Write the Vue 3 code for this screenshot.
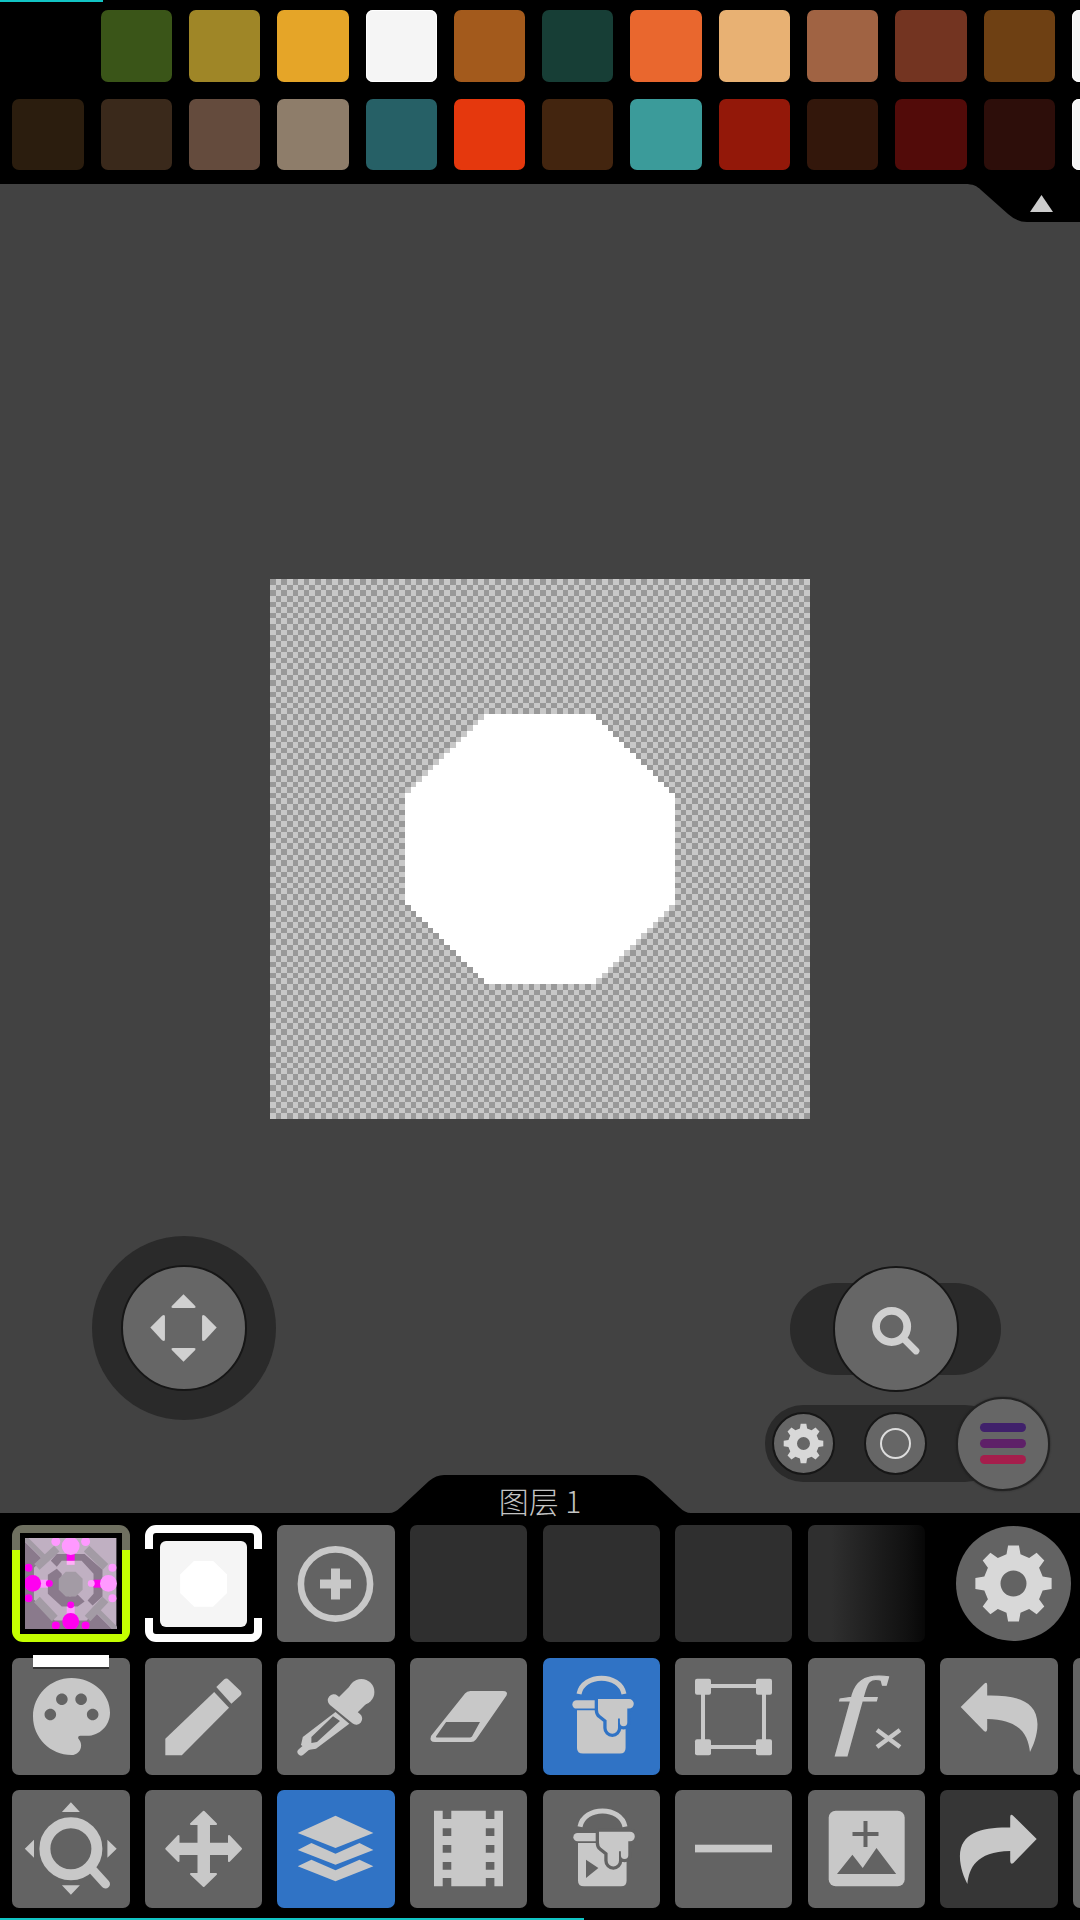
<template>
  <div class="app">
    <header class="palette">
      <div class="progress-top"></div>
      <div
        v-for="(color, i) in swatches"
        :key="i"
        class="swatch"
        :class="{ light: color === '#f5f5f5' }"
        :style="{ background: color }"
      ></div>
    </header>

    <main class="stage">
      <svg class="notch" viewBox="0 0 115 38">
        <path d="M0 0C8 0 12 2 16 6L43 30Q52 38 62 38H115V0Z" fill="#000" />
        <path d="M65 28H88L76.5 11Z" fill="#ccc" />
      </svg>

      <svg class="canvas" viewBox="0 0 96 96" shape-rendering="crispEdges">
        <rect width="96" height="96" fill="#c8c8c8" />
        <path :d="checkerPath" fill="#999" />
        <rect
          v-for="row in octagonRows"
          :key="row.y"
          :x="row.x"
          :y="row.y"
          :width="row.w"
          height="1"
          fill="#fff"
        />
      </svg>

      <!-- 摇杆 -->
      <div class="joystick">
        <div class="knob">
          <svg viewBox="0 0 125 125" class="fill-icon">
            <path d="M62 28L74 40Q75 42 73 42H51Q49 42 50 40Z" />
            <path d="M62 97L74 85Q75 83 73 83H51Q49 83 50 85Z" />
            <path d="M28 62L40 50Q43 48 43 51V74Q43 77 40 75Z" />
            <path d="M96 62L84 50Q81 48 81 51V74Q81 77 84 75Z" />
          </svg>
        </div>
      </div>

      <div class="zoom-track">
        <div class="knob">
          <svg viewBox="0 0 125 125" class="line-icon">
            <circle cx="58" cy="60" r="16" stroke-width="8" />
            <path d="M71 73L83 85" stroke-width="7" stroke-linecap="round" />
          </svg>
        </div>
      </div>

      <div class="quick-bar">
        <div class="mini">
          <svg viewBox="0 0 63 63" class="gear-icon">
            <path :d="gearPath(31.5, 31.5, 20, 15.5, 6.5)" fill-rule="evenodd" />
          </svg>
        </div>
        <div class="mini">
          <span class="ring"></span>
        </div>
        <div class="menu">
          <span class="bar" style="background: #40216b"></span>
          <span class="bar" style="background: #5e2068"></span>
          <span class="bar" style="background: #a51e4c"></span>
        </div>
      </div>

      <div class="tab">
        <svg viewBox="0 0 302 38">
          <path d="M0 38Q6 38 12 32L40 6Q47 0 55 0H247Q255 0 262 6L290 32Q296 38 302 38Z" fill="#000" />
        </svg>
        <span>图层 1</span>
      </div>
    </main>

    <footer class="tools">
      <div class="tool-grid">
        <!-- 第一行: 图层 -->
        <div class="layer-current">
          <svg viewBox="0 0 92 92" class="thumb">
            <rect width="92" height="92" fill="#c0b0c2" />
            <path d="M0 4V92H88Z" fill="#8a7a8c" />
            <path d="M0 0L92 92" stroke="#a39ba5" stroke-width="5" />
            <path d="M30 9L62 9L83 30V62L62 83H30L9 62V30Z" fill="#c0b0c2" />
            <path
              d="M32 10.7L12 29M62 10.7L81 29M12 62L30 81M81 62L63 81"
              stroke="#a39ba5"
              stroke-width="8"
              fill="none"
            />
            <path d="M32 16H60L78 32V59L68 68L63 63L69 56V36L57 23H37L32 29L26 23Z" fill="#8a7a8c" />
            <path d="M23 37L32 31L37 36V52L45 59L53 57L60 64L53 69H37L23 56Z" fill="#8a7a8c" />
            <path d="M41 34H51L58 41V52L51 59H41L34 52V41Z" fill="#a39ba5" />
            <rect
              v-for="(s, i) in thumbSquares"
              :key="'s' + i"
              :x="s[0]"
              :y="s[1]"
              width="8"
              :height="s[3] || 8"
              :fill="s[2]"
            />
            <circle
              v-for="(d, i) in thumbDots"
              :key="'d' + i"
              :cx="d[0]"
              :cy="d[1]"
              :r="d[2]"
              :fill="d[3]"
            />
          </svg>
        </div>

        <div class="layer-frame">
          <div class="layer-preview"><span></span></div>
        </div>

        <div class="tool">
          <svg viewBox="0 0 117.4 117.4">
            <circle cx="58.5" cy="59" r="34.6" fill="none" stroke="#c8c8c8" stroke-width="6.6" />
            <path d="M54 43.5H63V54.5H74V63.5H63V74.5H54V63.5H43V54.5H54Z" />
          </svg>
        </div>
        <div class="slot"></div>
        <div class="slot"></div>
        <div class="slot"></div>
        <div class="slot fade"></div>
        <div class="settings">
          <svg viewBox="0 0 115 115" class="gear-icon">
            <path :d="gearPath(57.5, 57.5, 38.5, 30, 13)" fill-rule="evenodd" />
          </svg>
        </div>
        <div class="spacer"></div>

        <!-- 第二行 -->
        <div class="tool">
          <span class="mark"></span>
          <svg viewBox="2 2 20 20" class="palette-icon">
            <path d="M12 2C6.49 2 2 6.49 2 12s4.49 10 10 10c1.38 0 2.5-1.12 2.5-2.5 0-.61-.23-1.2-.64-1.67-.08-.1-.13-.21-.13-.33 0-.28.22-.5.5-.5H16c3.31 0 6-2.69 6-6 0-4.96-4.49-9-10-9zm-5.5 11c-.83 0-1.5-.67-1.5-1.5S5.67 10 6.5 10s1.5.67 1.5 1.5S7.33 13 6.5 13zm3-4C8.67 9 8 8.33 8 7.5S8.67 6 9.5 6s1.5.67 1.5 1.5S10.33 9 9.5 9zm5 0c-.83 0-1.5-.67-1.5-1.5S13.67 6 14.5 6s1.5.67 1.5 1.5S15.33 9 14.5 9zm3 4c-.83 0-1.5-.67-1.5-1.5s.67-1.5 1.5-1.5 1.5.67 1.5 1.5-.67 1.5-1.5 1.5z" />
          </svg>
        </div>
        <div class="tool">
          <svg viewBox="0 0 117.4 117.4">
            <path d="M20.3 80.7L69.2 34L84 49.7L36.8 97.3H20.3Z" />
            <path d="M71.3 29L79 21.5Q81.6 19.5 84 22L95.5 33Q97.5 35.5 95.5 37.5L86.4 45.7Z" />
          </svg>
        </div>
        <div class="tool">
          <svg viewBox="0 0 117.4 117.4">
            <circle cx="84.4" cy="34" r="13" />
            <path d="M66 52L84 34" stroke="#c8c8c8" stroke-width="24" />
            <path d="M56.8 42.3L79.2 60.7" stroke="#c8c8c8" stroke-width="12" stroke-linecap="round" />
            <path
              fill-rule="evenodd"
              d="M58.5 54L25.8 79L24 87L31 92L39 90.7L72.3 65.7ZM56 58.3L63 63L40 84L34.4 85V79Z"
            />
            <path d="M31 88L24 94" stroke="#c8c8c8" stroke-width="7" stroke-linecap="round" />
          </svg>
        </div>
        <div class="tool">
          <svg viewBox="0 0 117.4 117.4">
            <path
              fill-rule="evenodd"
              d="M60.3 33H93Q98.5 33 96.5 37.5L66 81.5Q64 84 61 84H25Q19 84 21 78L55 35.5Q57 33 60.3 33ZM36.1 64L26 78.5Q25.5 79.5 27 79.5H60Q61 79.5 62 78.5L70 64Z"
            />
          </svg>
        </div>
        <div class="tool active">
          <svg viewBox="0 0 117.4 117.4">
            <path d="M36 36C40 15 77 15 81 36" fill="none" stroke="#c8c8c8" stroke-width="5" />
            <path d="M34 52.3H82.6V90Q82.6 95.6 77 95.6H40Q34 95.6 34 90Z" />
            <path d="M33.5 42.3H60V50.6H33.5A4.15 4.15 0 0 1 33.5 42.3Z" />
            <path class="cut-line" :d="dripPath" />
          </svg>
        </div>
        <div class="tool">
          <svg viewBox="0 0 117.4 117.4">
            <path d="M28 28H89V89H28Z" fill="none" stroke="#c8c8c8" stroke-width="4" />
            <rect x="20" y="20.7" width="16" height="16" rx="2" />
            <rect x="81" y="20.7" width="16" height="16" rx="2" />
            <rect x="20" y="81.3" width="16" height="16" rx="2" />
            <rect x="81" y="81.3" width="16" height="16" rx="2" />
          </svg>
        </div>
        <div class="tool">
          <svg viewBox="0 0 117.4 117.4">
            <text transform="translate(26 79.3) scale(1.6 1)" class="fx">f</text>
            <path d="M69 72L92 89M92 72L69 89" stroke="#c8c8c8" stroke-width="4.5" />
          </svg>
        </div>
        <div class="tool">
          <svg viewBox="0 0 117.4 117.4">
            <path :d="undoPath" />
          </svg>
        </div>
        <div class="tool"></div>

        <!-- 第三行 -->
        <div class="tool">
          <svg viewBox="0 0 117.4 117.4">
            <circle cx="58.9" cy="58.7" r="26" fill="none" stroke="#c8c8c8" stroke-width="11" />
            <path d="M79 78L93.5 94" stroke="#c8c8c8" stroke-width="9" stroke-linecap="round" />
            <path d="M58.9 12.3L67.9 22H49.9ZM58.9 104.7L67.9 95.3H49.9ZM12.8 58.7L22 49.7V67.7ZM104.7 58.7L95.4 49.7V67.7Z" />
          </svg>
        </div>
        <div class="tool">
          <svg viewBox="0 0 117.4 117.4">
            <path
              stroke="#c8c8c8"
              stroke-width="2"
              stroke-linejoin="round"
              d="M58.7 21.7L71 34H64V53.7H84V46L96 58.7L84 71V64H64V84H71L58.7 96L46 84H53.5V64H33.5V71L21.3 58.7L33.5 46V53.7H53.5V34H46Z"
            />
          </svg>
        </div>
        <div class="tool active">
          <svg viewBox="0 0 117.4 117.4">
            <path d="M58.5 25.7L96.4 43L58.5 58L20.7 43Z" />
            <path d="M20.7 60L34.4 53L58.5 63.7L82.5 53L96.4 60L58.5 74.7Z" />
            <path d="M20.7 76.3L34.4 69.7L58.5 80.3L82.5 69.7L96.4 76.3L58.5 91.3Z" />
          </svg>
        </div>
        <div class="tool">
          <svg viewBox="0 0 117.4 117.4">
            <path fill-rule="evenodd" :d="filmPath" />
          </svg>
        </div>
        <div class="tool">
          <svg viewBox="0 0 117.4 117.4">
            <g transform="translate(1 0.7)">
              <path d="M36 36C40 15 77 15 81 36" fill="none" stroke="#c8c8c8" stroke-width="5" />
              <path d="M34 52.3H82.6V90Q82.6 95.6 77 95.6H40Q34 95.6 34 90Z" />
              <path d="M33.5 42.3H60V50.6H33.5A4.15 4.15 0 0 1 33.5 42.3Z" />
              <path d="M42 69L54.4 77.3L42 87.3Z" class="cut" />
              <path class="cut-line" :d="dripPath" />
            </g>
          </svg>
        </div>
        <div class="tool">
          <svg viewBox="0 0 117.4 117.4">
            <rect x="20" y="54.7" width="77" height="7.7" />
          </svg>
        </div>
        <div class="tool">
          <svg viewBox="0 0 117.4 117.4">
            <rect x="20.7" y="20.7" width="76" height="75.6" rx="7" />
            <path class="cut" d="M55.5 31H59.5V42H70.5V46H59.5V57H55.5V46H44.5V42H55.5Z" />
            <path class="cut" d="M29 84L44.4 64.7L54.7 78L68.5 58L88.2 84Z" />
          </svg>
        </div>
        <div class="tool dim">
          <svg viewBox="0 0 117.4 117.4">
            <path :d="undoPath" transform="matrix(-1 0 0 1 117.4 0)" />
          </svg>
        </div>
        <div class="tool"></div>
      </div>
      <div class="progress-bottom"></div>
    </footer>
  </div>
</template>

<script setup>
// 顶部调色板 (两行, 每行 13 个)
const swatches = [
  'transparent', '#3a5518', '#9f8627', '#e5a528', '#f5f5f5', '#a35a1c', '#173e36',
  '#e9672e', '#e8b173', '#a06343', '#733421', '#6e4013', '#f5f5f5',
  '#2b1d0e', '#3a291b', '#644b3d', '#8e7d6a', '#266066', '#e5380d', '#43250f',
  '#3b9b9a', '#931809', '#33170b', '#520b09', '#2d0e0a', '#f5f5f5'
]

// 透明背景的棋盘格, 96x96
let checkerPath = ''
for (let y = 0; y < 96; y++) {
  for (let x = y % 2; x < 96; x += 2) {
    checkerPath += `M${x} ${y}h1v1h-1z`
  }
}

// 画布上的像素八边形, 48x48 居中
const octagonRows = []
for (let r = 0; r < 48; r++) {
  const inset = Math.max(0, 14 - Math.min(r, 47 - r))
  octagonRows.push({ x: 24 + inset, y: 24 + r, w: 48 - inset * 2 })
}

const pink = '#ff99ff'
const magenta = '#ff00f0'
const pale = '#ffb0f8'

// 缩略图里的小方块和圆点
const thumbSquares = [
  [42, 15, magenta],
  [42, 23, pale, 4],
  [15, 42, pink],
  [69, 42, magenta],
  [42, 69, pink]
]
const thumbDots = [
  [46, 8, 9, pink], [31, 3.5, 4.5, pink], [61, 3.5, 4.5, pink],
  [7.7, 45.7, 8.5, magenta], [24.5, 45.7, 3.5, magenta], [3.5, 30, 4, magenta], [3.5, 60.7, 4, magenta],
  [84, 45.7, 8.5, pink], [66.7, 45.7, 3.5, pink], [88, 30, 4, pink], [88, 60.7, 4, pink],
  [46, 84, 8.5, magenta], [46, 67.3, 3.5, magenta], [31, 88, 4, magenta], [61, 88, 4, magenta]
]

const undoPath =
  'M20.7 49L44 26Q47 23 47.2 27V37.5C75 37 97 42 97.5 66C97.5 78 93 88 90 94C88 78 82 62 47.2 61V71Q47 75 44 73Z'

// 油漆桶上流下来的部分
const dripPath =
  'M55 41H86a4.8 4.8 0 0 1 0 9.6H84.3V64.5a3.7 3.7 0 0 1-7.4 0V60.5H75V70a5.7 5.7 0 0 1-11.4 0V62.3L57 57Q55 55.5 55 52Z'

function filmHoles(x, w) {
  const spans = [[20.7, 29], [38.3, 46], [55, 62.7], [72, 79.7], [88, 96.3]]
  return spans.map(([a, b]) => `M${x} ${a}H${x + w}V${b}H${x}Z`).join('')
}
const filmPath = 'M24 20.7H93V96.3H24Z' + filmHoles(32.7, 8.6) + filmHoles(75.8, 8.6)

// 齿轮: 8 个齿, 中间一个圆孔
function gearPath(cx, cy, outer, root, hole) {
  const teeth = 8
  const step = (Math.PI * 2) / teeth
  let d = ''
  for (let i = 0; i < teeth; i++) {
    const a = -Math.PI / 2 + i * step
    const pts = [
      [a - step * 0.3, root],
      [a - step * 0.18, outer],
      [a + step * 0.18, outer],
      [a + step * 0.3, root]
    ]
    for (const [ang, r] of pts) {
      const x = (cx + Math.cos(ang) * r).toFixed(2)
      const y = (cy + Math.sin(ang) * r).toFixed(2)
      d += (d ? 'L' : 'M') + x + ' ' + y
    }
  }
  d += 'Z'
  d += `M${cx + hole} ${cy}A${hole} ${hole} 0 1 0 ${cx - hole} ${cy}A${hole} ${hole} 0 1 0 ${cx + hole} ${cy}Z`
  return d
}
</script>

<style scoped>
.app {
  width: 1080px;
  height: 1920px;
  display: flex;
  flex-direction: column;
  background: #000;
  overflow: hidden;
  font-family: "Noto Sans CJK SC", "Liberation Sans", sans-serif;
}

.palette {
  position: relative;
  flex: 0 0 184px;
  box-sizing: border-box;
  padding: 10px 0 0 12.4px;
  display: grid;
  grid-template-columns: repeat(13, 71.3px);
  grid-auto-rows: 71.5px;
  column-gap: 17px;
  row-gap: 17px;
  overflow: hidden;
}

.progress-top {
  position: absolute;
  left: 0;
  top: 0;
  width: 103px;
  height: 2px;
  background: #12c4c4;
}

.swatch {
  border-radius: 7px;
}

.swatch.light {
  box-shadow: inset 0 0 0 1px #fff;
}

.stage {
  position: relative;
  flex: 1;
  background: #424242;
  display: flex;
  align-items: center;
  justify-content: center;
}

.notch {
  position: absolute;
  top: 0;
  right: 0;
  width: 115px;
  height: 38px;
}

.canvas {
  width: 540px;
  height: 540px;
  display: block;
}

.joystick {
  position: absolute;
  left: 92px;
  top: 1052px;
  width: 184px;
  height: 184px;
  border-radius: 50%;
  background: #2a2a2a;
  display: flex;
  align-items: center;
  justify-content: center;
}

.knob {
  width: 126px;
  height: 126px;
  flex-shrink: 0;
  box-sizing: border-box;
  border-radius: 50%;
  background: #666;
  border: 2px solid #161616;
  overflow: hidden;
}

.knob svg {
  display: block;
  width: 122px;
  height: 122px;
}

.fill-icon {
  fill: #d0d0d0;
}

.line-icon {
  fill: none;
  stroke: #d0d0d0;
}

.zoom-track {
  position: absolute;
  left: 790px;
  top: 1099px;
  width: 211px;
  height: 92px;
  border-radius: 46px;
  background: #2a2a2a;
  display: flex;
  align-items: center;
  justify-content: center;
}

.quick-bar {
  position: absolute;
  left: 765px;
  top: 1221px;
  width: 238px;
  height: 77px;
  box-sizing: border-box;
  padding-left: 7px;
  border-radius: 38px;
  background: #2a2a2a;
  display: flex;
  align-items: center;
  gap: 29px;
}

.mini {
  width: 63px;
  height: 63px;
  flex-shrink: 0;
  box-sizing: border-box;
  border-radius: 50%;
  background: #666;
  border: 2px solid #161616;
  display: flex;
  align-items: center;
  justify-content: center;
}

.mini svg {
  width: 63px;
  height: 63px;
  flex-shrink: 0;
}

.gear-icon {
  fill: #d8d8d8;
}

.ring {
  width: 31px;
  height: 31px;
  box-sizing: border-box;
  border: 2.5px solid #ddd;
  border-radius: 50%;
}

.menu {
  width: 94px;
  height: 94px;
  flex-shrink: 0;
  box-sizing: border-box;
  border-radius: 50%;
  background: #666;
  border: 2px solid #222;
  box-shadow: 0 0 2px #222;
  display: flex;
  flex-direction: column;
  align-items: center;
  justify-content: center;
  gap: 7px;
}

.bar {
  width: 46px;
  height: 9px;
  border-radius: 4.5px;
}

.tab {
  position: absolute;
  left: 389px;
  bottom: 0;
  width: 302px;
  height: 38px;
  display: flex;
  justify-content: center;
  box-sizing: border-box;
  padding-top: 10px;
  color: #c4c4c4;
  font-size: 30px;
  font-weight: 300;
  line-height: 30px;
  z-index: 1;
}

.tab svg {
  position: absolute;
  left: 0;
  top: 0;
  width: 302px;
  height: 38px;
}

.tab span {
  position: relative;
  white-space: pre;
}

.tools {
  position: relative;
  flex: 0 0 407px;
  box-sizing: border-box;
  padding: 12px 0 0 12.4px;
  overflow: hidden;
}

.tool-grid {
  display: grid;
  grid-template-columns: repeat(9, 117.4px);
  grid-auto-rows: 117.4px;
  column-gap: 15.15px;
  row-gap: 15.2px;
}

.tool {
  --btn: #636363;
  position: relative;
  background: var(--btn);
  border-radius: 7px;
  fill: #c8c8c8;
}

.tool.active {
  --btn: #3073c5;
}

.tool.dim {
  --btn: #363636;
}

.tool svg {
  display: block;
  width: 100%;
  height: 100%;
}

.tool svg.palette-icon {
  position: absolute;
  left: 20.2px;
  top: 20.2px;
  width: 77px;
  height: 77px;
}

.cut {
  fill: var(--btn);
}

.cut-line {
  stroke: var(--btn);
  stroke-width: 6.6;
  stroke-linejoin: round;
  paint-order: stroke;
}

.fx {
  font-family: "Liberation Serif", serif;
  font-style: italic;
  font-size: 86.5px;
  fill: #c8c8c8;
  stroke: #c8c8c8;
  stroke-width: 1;
}

.mark {
  position: absolute;
  left: 20.6px;
  top: -3px;
  width: 76px;
  height: 12px;
  background: #fff;
  border-bottom: 2px solid #333;
}

.slot {
  background: #2f2f2f;
  border-radius: 7px;
}

.slot.fade {
  background: linear-gradient(90deg, #2f2f2f 20%, #1c1c1c 60%, #111 84%, #070707 100%);
}

.layer-current {
  box-sizing: border-box;
  border-radius: 11px;
  background: linear-gradient(#6f7060 0, #6f7060 25px, #c4ff00 25px);
  padding: 8px;
}

.thumb {
  display: block;
  box-sizing: border-box;
  width: 101.4px;
  height: 101.4px;
  padding: 5px;
  background: #000;
}

.layer-frame {
  position: relative;
  box-sizing: border-box;
  border: 8px solid #fff;
  border-radius: 11px;
  display: flex;
  align-items: center;
  justify-content: center;
}

.layer-frame::before,
.layer-frame::after {
  content: "";
  position: absolute;
  top: 16px;
  bottom: 16px;
  width: 8px;
  background: #000;
}

.layer-frame::before {
  left: -8px;
}

.layer-frame::after {
  right: -8px;
}

.layer-preview {
  width: 87px;
  height: 86px;
  flex-shrink: 0;
  border-radius: 6px;
  background: #f5f5f5;
  display: flex;
  align-items: center;
  justify-content: center;
}

.layer-preview span {
  width: 47px;
  height: 46px;
  background: #fff;
  clip-path: polygon(30% 0, 70% 0, 100% 30%, 100% 70%, 70% 100%, 30% 100%, 0 70%, 0 30%);
}

.settings {
  width: 115px;
  height: 115px;
  margin: 1px 0 0 15.5px;
  border-radius: 50%;
  background: #636363;
}

.settings svg {
  display: block;
  width: 115px;
  height: 115px;
}

.progress-bottom {
  position: absolute;
  left: 0;
  bottom: 0;
  width: 584px;
  height: 2px;
  background: #12c4c4;
}
</style>

<style>
html,
body {
  margin: 0;
  background: #000;
}
</style>
